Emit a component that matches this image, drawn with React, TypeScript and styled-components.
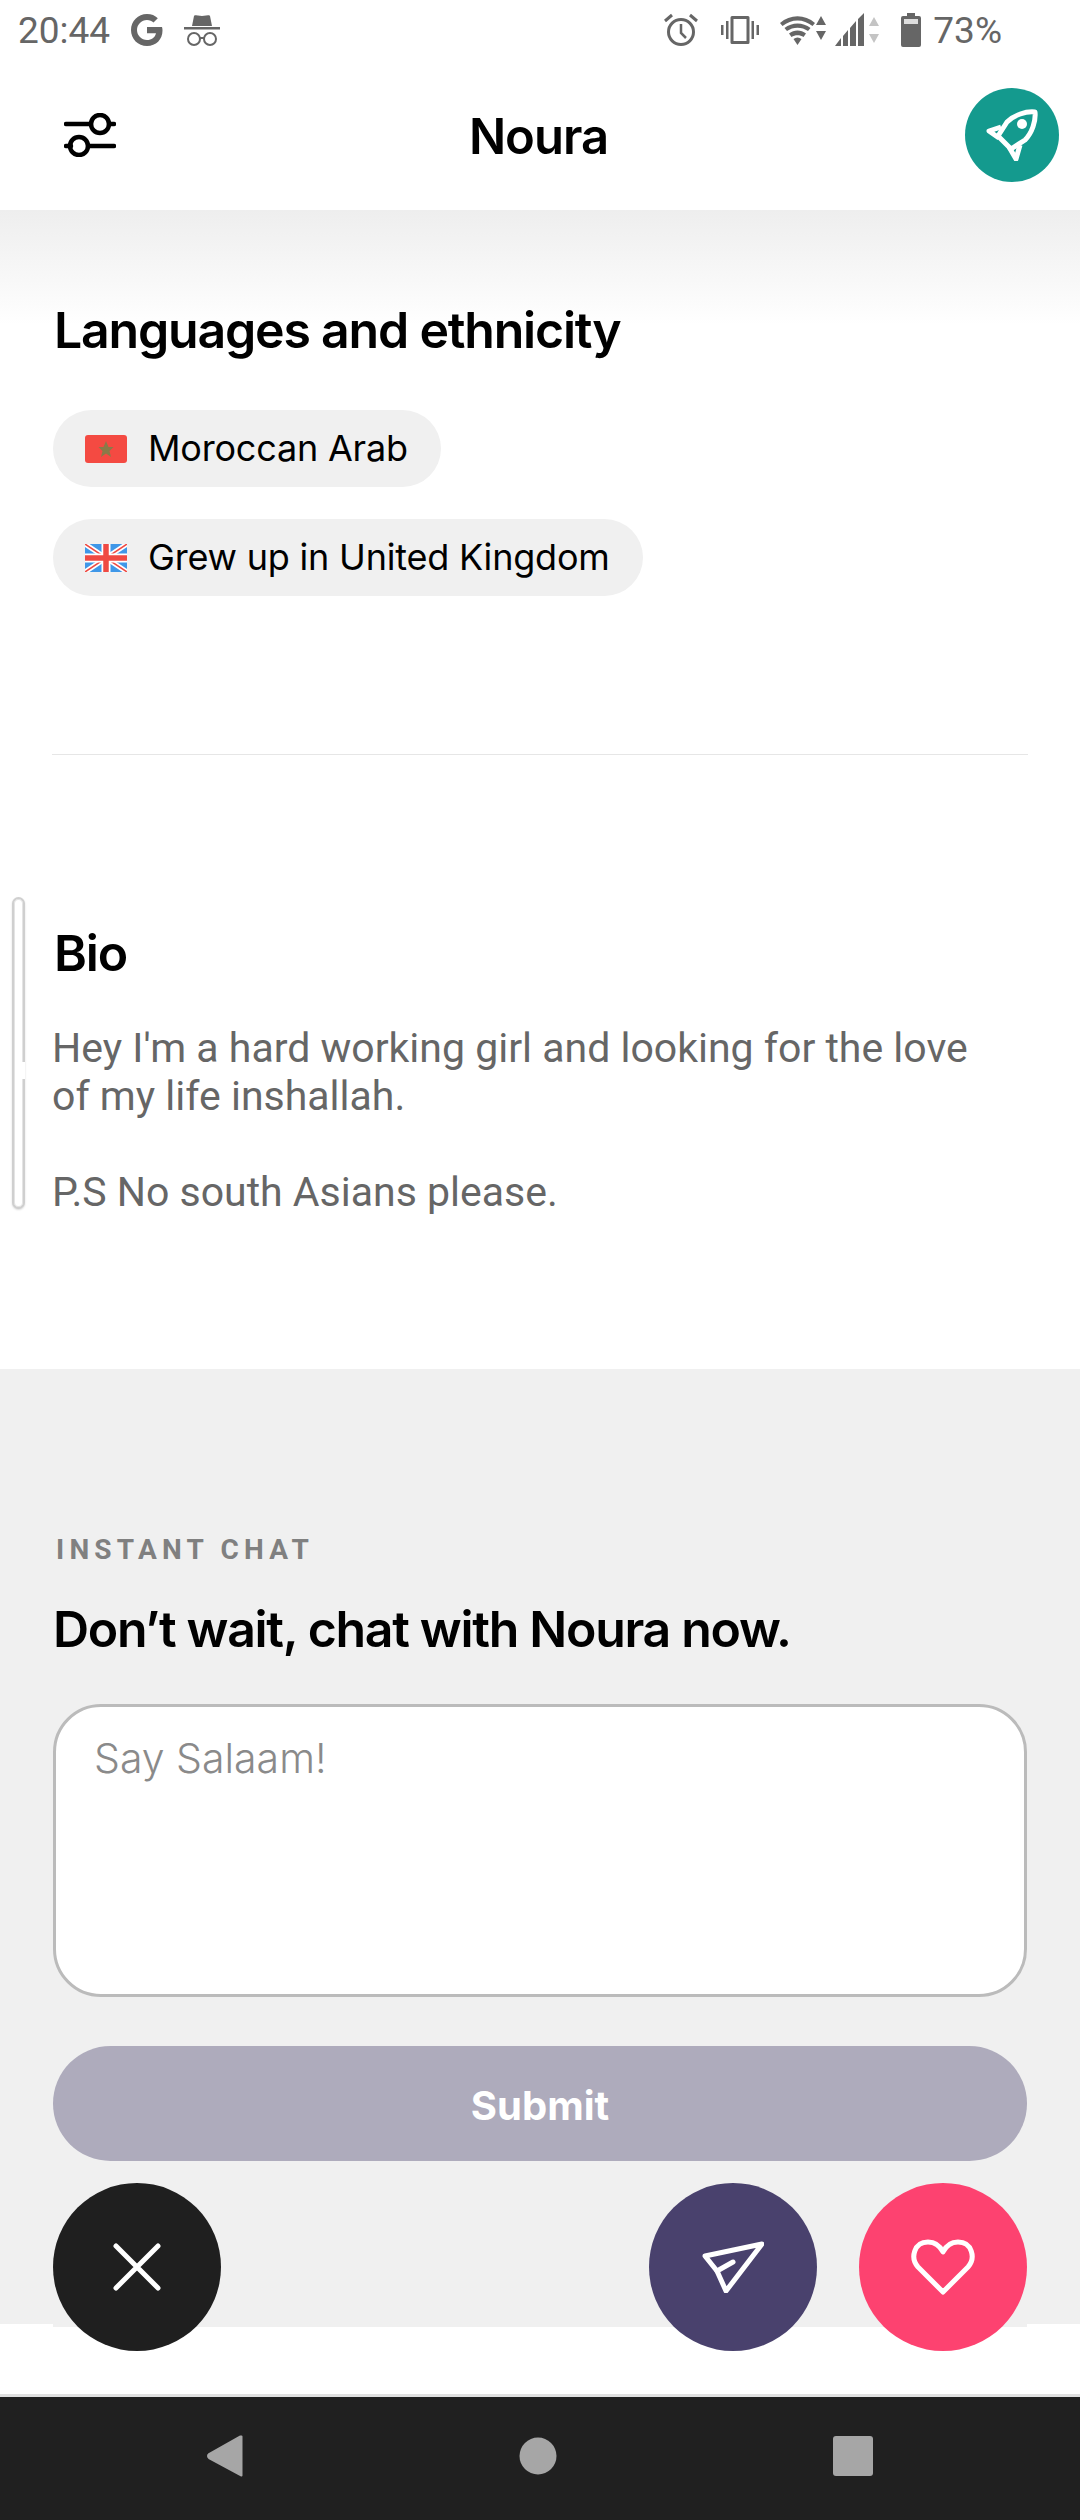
import styled, { createGlobalStyle } from "styled-components";

const GlobalStyle = createGlobalStyle`
  html, body {
    margin: 0;
    padding: 0;
    background: #fff;
  }
  * {
    box-sizing: border-box;
  }
`;

const App = () => {
  return (
    <Screen>
      <GlobalStyle />
      <StatusBar>
        <StatusGroup>
          <Clock>20:44</Clock>
          <GoogleIcon />
          <IncognitoIcon />
        </StatusGroup>
        <StatusGroup>
          <IconSlot $left={0}>
            <AlarmIcon />
          </IconSlot>
          <IconSlot $left={22}>
            <VibrateIcon />
          </IconSlot>
          <IconSlot $left={21}>
            <WifiIcon />
          </IconSlot>
          <IconSlot $left={9}>
            <SignalIcon />
          </IconSlot>
          <IconSlot $left={22}>
            <BatteryIcon />
          </IconSlot>
          <Percent>73%</Percent>
        </StatusGroup>
      </StatusBar>

      <Header>
        <SlidersIcon />
        <HeaderTitle>Noura</HeaderTitle>
        <BoostButton>
          <RocketIcon />
        </BoostButton>
      </Header>

      <LanguagesSection>
        <SectionTitle>Languages and ethnicity</SectionTitle>
        <ChipList>
          <Chip>
            <MoroccoFlag />
            <ChipLabel>Moroccan Arab</ChipLabel>
          </Chip>
          <Chip>
            <UkFlag />
            <ChipLabel>Grew up in United Kingdom</ChipLabel>
          </Chip>
        </ChipList>
      </LanguagesSection>

      <Divider />

      <BioSection>
        <SectionTitle>Bio</SectionTitle>
        <BioText>
          Hey I'm a hard working girl and looking for the love of my life
          inshallah.
          <br />
          <br />
          P.S No south Asians please.
        </BioText>
        <ScrollHandle />
      </BioSection>

      <ChatSection>
        <Eyebrow>INSTANT CHAT</Eyebrow>
        <ChatTitle>Don’t wait, chat with Noura now.</ChatTitle>
        <MessageBox placeholder='Say Salaam!' />
        <SubmitButton>Submit</SubmitButton>
      </ChatSection>

      <BottomSpace />

      <Actions>
        <ActionButton $bg='#1f1f1f'>
          <CloseIcon />
        </ActionButton>
        <ActionGroup>
          <ActionButton $bg='#49416d'>
            <SendIcon />
          </ActionButton>
          <ActionButton $bg='#fd4270'>
            <HeartIcon />
          </ActionButton>
        </ActionGroup>
      </Actions>

      <NavBar>
        <NavIcon width='36' height='42' viewBox='0 0 36 42'>
          <path
            d='M34.500 1.500v39L2 23a2.500 2.500 0 0 1 0-4L33 1.500z'
            stroke='#a6a6a6'
            strokeWidth='2'
            strokeLinejoin='round'
            fill='#a6a6a6'
          />
        </NavIcon>
        <NavIcon width='38' height='38' viewBox='0 0 38 38'>
          <circle cx='19' cy='19' r='18.500' fill='#a6a6a6' />
        </NavIcon>
        <NavIcon width='40' height='40' viewBox='0 0 40 40'>
          <rect width='40' height='40' rx='3' fill='#a6a6a6' />
        </NavIcon>
      </NavBar>
    </Screen>
  );
};

export default App;

const GoogleIcon = () => (
  <svg width='34' height='34' viewBox='0 0 34 34'>
    <path
      d='M17 14h15c.4 1.200.5 2.200.5 3.500C32.500 26.500 26 33 17 33 8 33 1 26 1 17S8 1 17 1c4.500 0 8 1.600 10.800 4.200l-4.300 4.300C21.800 8 19.700 7 17 7 11.500 7 7 11.500 7 17s4.500 10 10 10c4.600 0 8-2.400 9-6.800h-9z'
      fill='#666'
    />
  </svg>
);

const IncognitoIcon = () => (
  <svg width='36' height='34' viewBox='0 0 36 34'>
    <path d='M8 13 10 3c.3-1 1-1 2-.7l6 .7 6-.7c1-.3 1.700-.3 2 .7l2 10z' fill='#666' />
    <rect x='0' y='14' width='36' height='2.500' fill='#666' />
    <circle cx='10' cy='26' r='6' fill='none' stroke='#666' strokeWidth='2' />
    <circle cx='26' cy='26' r='6' fill='none' stroke='#666' strokeWidth='2' />
    <path d='M16 25h4' stroke='#666' strokeWidth='2' />
  </svg>
);

const AlarmIcon = () => (
  <svg width='36' height='34' viewBox='0 0 36 34' fill='none' stroke='#666'>
    <circle cx='18' cy='19' r='12.500' strokeWidth='3' />
    <path d='M18 11v9l5 5' strokeWidth='2.500' />
    <path d='M2 8l7-6M34 8l-7-6' strokeWidth='3' />
  </svg>
);

const VibrateIcon = () => (
  <svg width='38' height='28' viewBox='0 0 38 28' fill='#666'>
    <path
      fillRule='evenodd'
      d='M11 0h16a1.500 1.500 0 0 1 1.500 1.500v25A1.500 1.500 0 0 1 27 28H11a1.500 1.500 0 0 1-1.500-1.500v-25A1.500 1.500 0 0 1 11 0zm1.500 3v22h13V3z'
    />
    <rect x='0' y='9' width='2.500' height='10' />
    <rect x='5' y='5' width='2.500' height='18' />
    <rect x='30.500' y='5' width='2.500' height='18' />
    <rect x='35.500' y='9' width='2.500' height='10' />
  </svg>
);

const WifiIcon = () => (
  <svg width='46' height='32' viewBox='0 0 46 32' fill='#666'>
    <path d='M0 9C10 0 25 0 35 9l-2.500 3C23.500 4.500 11.500 4.500 2.500 12z' />
    <path d='M4.500 14c7.500-6 18.500-6 26 0L28 17c-6-4.500-15-4.500-21 0z' />
    <path d='M9 19.500c5-4 12-4 17 0L23.500 23c-3.500-2.500-8.500-2.500-12 0z' />
    <path d='M13.500 25c2.500-2 5.500-2 8 0l-4 6z' />
    <path d='M41 2l5 9H36zM41 26l-5-9h10z' />
  </svg>
);

const SignalIcon = () => (
  <svg width='44' height='34' viewBox='0 0 44 34' fill='#666'>
    <path d='M0 33 6 25v8zM8 23l5-6v16H8zM15 15l6-7v25h-6zM23 6l6-6v33h-6z' />
    <path d='M39 4l5 9H34zM39 30l-5-9h10z' fill='#c4c4c4' />
  </svg>
);

const BatteryIcon = () => (
  <svg width='20' height='34' viewBox='0 0 20 34' fill='#666'>
    <path d='M6 0h8v3h4a2 2 0 0 1 2 2v27a2 2 0 0 1-2 2H2a2 2 0 0 1-2-2V5a2 2 0 0 1 2-2h4z' />
    <rect x='3' y='6' width='14' height='5' fill='#ddd' />
  </svg>
);

const SlidersIcon = () => (
  <svg width='52' height='44' viewBox='0 0 52 44' fill='none' stroke='#000' strokeWidth='4.500' strokeLinecap='round'>
    <path d='M2 11h25M45 11h5M2 33h5M24 33h26' />
    <circle cx='36' cy='11' r='9' />
    <circle cx='15' cy='33' r='9' />
  </svg>
);

const RocketIcon = () => (
  <svg width='52' height='52' viewBox='0 0 52 52' fill='none' stroke='#fff' strokeWidth='5' strokeLinejoin='round'>
    <path d='M49 3C40 2 28 6 21 13L12 27l13 13 14-9c7-7 11-19 10-28z' />
    <path d='M15 18 3 22l10 7M34 36l-4 14-7-12' />
    <circle cx='36' cy='15' r='5' fill='#fff' stroke='none' />
  </svg>
);

const CloseIcon = () => (
  <svg width='48' height='48' viewBox='0 0 48 48' stroke='#fff' strokeWidth='5' strokeLinecap='round'>
    <path d='M3 3l42 42M45 3 3 45' />
  </svg>
);

const SendIcon = () => (
  <svg width='62' height='52' viewBox='0 0 62 52' fill='none' stroke='#fff' strokeWidth='5' strokeLinejoin='round' strokeLinecap='round'>
    <path d='M60 3 3 15l12 15 9 20z' />
    <path d='M15 30l16-9' />
  </svg>
);

const HeartIcon = () => (
  <svg width='64' height='56' viewBox='0 0 64 56' fill='none' stroke='#fff' strokeWidth='5' strokeLinejoin='round'>
    <path d='M32 53 7 28C-1 19 3 3 17 3c7 0 12 4 15 10 3-6 8-10 15-10 14 0 18 16 10 25z' />
  </svg>
);

const MoroccoFlag = () => (
  <FlagSvg viewBox='0 0 42 28'>
    <rect width='42' height='28' rx='3' fill='#f44a42' />
    <path d='M21 6l2.500 6h5l-4 4 1.500 6-5-3.500-5 3.500 1.500-6-4-4h5z' fill='#8a7a48' />
  </FlagSvg>
);

const UkFlag = () => (
  <FlagSvg viewBox='0 0 42 28'>
    <rect width='42' height='28' fill='#3f97e8' />
    <path d='M0 0l42 28M42 0 0 28' stroke='#fff' strokeWidth='5' />
    <path d='M0 0l42 28M42 0 0 28' stroke='#ef4a43' strokeWidth='1.500' />
    <path d='M21 0v28M0 14h42' stroke='#fff' strokeWidth='9' />
    <path d='M21 0v28M0 14h42' stroke='#ef4a43' strokeWidth='5.500' />
  </FlagSvg>
);

const Screen = styled.div`
  position: relative;
  display: flex;
  flex-direction: column;
  width: 1080px;
  height: 2520px;
  overflow: hidden;
  background: #fff;
  font-family: "Inter", "Liberation Sans", sans-serif;
  color: #000;
`;

const StatusBar = styled.div`
  display: flex;
  justify-content: space-between;
  align-items: center;
  height: 60px;
  padding: 0 78px 0 18px;
`;

const StatusGroup = styled.div`
  display: flex;
  align-items: center;
  gap: 20px;
  &:last-child {
    gap: 0;
  }
`;

const IconSlot = styled.span<{ $left: number }>`
  display: flex;
  margin-left: ${(p) => p.$left}px;
`;

const Clock = styled.span`
  font-family: "Roboto", sans-serif;
  font-size: 37px;
  color: #666;
`;

const Percent = styled(Clock)`
  margin-left: 12px;
`;

const Header = styled.div`
  display: flex;
  justify-content: space-between;
  align-items: center;
  height: 150px;
  padding: 0 21px 0 64px;
`;

const HeaderTitle = styled.h1`
  margin: 2px 0 0 -4px;
  font-size: 49px;
  font-weight: 600;
  letter-spacing: -1px;
`;

const BoostButton = styled.div`
  display: flex;
  justify-content: center;
  align-items: center;
  width: 94px;
  height: 94px;
  border-radius: 50%;
  background: #149a8e;
`;

const LanguagesSection = styled.section`
  padding: 90px 53px 158px;
  background: linear-gradient(#eeeeee 0, #f8f8f8 70px, #fff 115px);
`;

const SectionTitle = styled.h2`
  margin: 0 0 0 1px;
  font-size: 50px;
  font-weight: 600;
  letter-spacing: -1.200px;
  line-height: 60px;
`;

const ChipList = styled.div`
  display: flex;
  flex-direction: column;
  align-items: flex-start;
  gap: 32px;
  margin-top: 50px;
`;

const Chip = styled.div`
  display: flex;
  align-items: center;
  gap: 22px;
  height: 77px;
  padding: 0 33px 0 32px;
  border-radius: 39px;
  background: #f0f0f0;
`;

const ChipLabel = styled.span`
  margin: -2px 0 0 -1px;
  font-size: 36px;
  font-weight: 400;
  letter-spacing: -0.200px;
`;

const FlagSvg = styled.svg`
  width: 42px;
  height: 28px;
`;

const Divider = styled.div`
  height: 1px;
  margin: 0 52px;
  background: #e6e6e6;
`;

const BioSection = styled.section`
  padding: 168px 100px 0 53px;
  height: 614px;
`;

const BioText = styled.p`
  margin: 41px 0 0 -1px;
  font-family: "Roboto", sans-serif;
  font-size: 41px;
  line-height: 48px;
  color: #666;
`;

const ScrollHandle = styled.div`
  position: absolute;
  top: 897px;
  left: 12px;
  width: 13px;
  height: 312px;
  border: 2px solid #cfcfcf;
  border-radius: 7px;
  background: #fff;
  box-shadow:
    0 1px 2px rgba(0, 0, 0, 0.15),
    inset 0 0 0 1px #e4e4e4;
  &::after {
    content: "";
    position: absolute;
    top: 163px;
    right: -2px;
    width: 3px;
    height: 17px;
    background: #fff;
  }
`;

const ChatSection = styled.section`
  position: relative;
  display: flex;
  flex-direction: column;
  height: 955px;
  padding: 165px 53px 0;
  background: #f0f0f0;
  &::after {
    content: "";
    position: absolute;
    left: 53px;
    right: 53px;
    bottom: -3px;
    height: 3px;
    background: #f0f0f0;
  }
`;

const Eyebrow = styled.div`
  margin-left: 3px;
  font-family: "Roboto", sans-serif;
  font-size: 28px;
  font-weight: 700;
  letter-spacing: 5.200px;
  line-height: 32px;
  color: #808080;
`;

const ChatTitle = styled.h2`
  margin: 33px 0 0;
  font-size: 50px;
  font-weight: 600;
  letter-spacing: -1.300px;
  line-height: 60px;
`;

const MessageBox = styled.textarea`
  display: block;
  width: 974px;
  height: 293px;
  margin-top: 45px;
  padding: 26px 38px;
  border: 3px solid #bbb;
  border-radius: 48px;
  outline: none;
  resize: none;
  background: #fff;
  font-family: "Inter", sans-serif;
  font-size: 41px;
  font-weight: 300;
  &::placeholder {
    color: #8a8a8a;
  }
`;

const SubmitButton = styled.button`
  width: 974px;
  height: 115px;
  margin-top: 49px;
  padding: 3px 0 0;
  border: 0;
  border-radius: 58px;
  background: #aeabbc;
  color: #fff;
  font-family: "Inter", sans-serif;
  font-size: 40px;
  font-weight: 700;
`;

const BottomSpace = styled.div`
  flex: 1;
  border-bottom: 3px solid #e0e0e0;
`;

const Actions = styled.div`
  position: absolute;
  top: 2183px;
  left: 53px;
  display: flex;
  justify-content: space-between;
  width: 974px;
`;

const ActionGroup = styled.div`
  display: flex;
  gap: 42px;
`;

const ActionButton = styled.div<{ $bg: string }>`
  display: flex;
  justify-content: center;
  align-items: center;
  width: 168px;
  height: 168px;
  border-radius: 50%;
  background: ${(p) => p.$bg};
`;

const NavBar = styled.div`
  display: flex;
  justify-content: center;
  align-items: center;
  gap: 276px;
  height: 123px;
  padding-bottom: 6px;
  background: #202020;
`;

const NavIcon = styled.svg`
  display: block;
`;
